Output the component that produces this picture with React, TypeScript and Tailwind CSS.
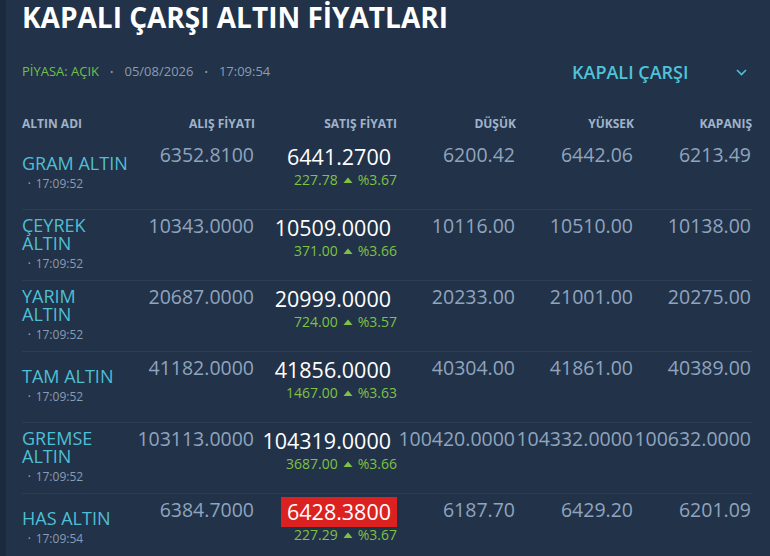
import React from "react";

type Row = {
  name: string[];
  time: string;
  alis: string;
  satis: string;
  change: string;
  pct: string;
  low: string;
  high: string;
  close: string;
  hot?: boolean;
};

const rows: Row[] = [
  { name: ["GRAM ALTIN"], time: "17:09:52", alis: "6352.8100", satis: "6441.2700", change: "227.78", pct: "%3.67", low: "6200.42", high: "6442.06", close: "6213.49" },
  { name: ["ÇEYREK", "ALTIN"], time: "17:09:52", alis: "10343.0000", satis: "10509.0000", change: "371.00", pct: "%3.66", low: "10116.00", high: "10510.00", close: "10138.00" },
  { name: ["YARIM", "ALTIN"], time: "17:09:52", alis: "20687.0000", satis: "20999.0000", change: "724.00", pct: "%3.57", low: "20233.00", high: "21001.00", close: "20275.00" },
  { name: ["TAM ALTIN"], time: "17:09:52", alis: "41182.0000", satis: "41856.0000", change: "1467.00", pct: "%3.63", low: "40304.00", high: "41861.00", close: "40389.00" },
  { name: ["GREMSE", "ALTIN"], time: "17:09:52", alis: "103113.0000", satis: "104319.0000", change: "3687.00", pct: "%3.66", low: "100420.0000", high: "104332.0000", close: "100632.0000" },
  { name: ["HAS ALTIN"], time: "17:09:54", alis: "6384.7000", satis: "6428.3800", change: "227.29", pct: "%3.67", low: "6187.70", high: "6429.20", close: "6201.09", hot: true },
];

const cols = "grid grid-cols-[118px_115px_142px_119px_118px_118px]";

function Num({ v }: { v: string }) {
  return (
    <div className="flex justify-end pt-[4px] pr-[1px] text-[19.5px] leading-[24px] text-[#8fa4be] whitespace-nowrap">
      {v}
    </div>
  );
}

export default function App() {
  return (
    <div
      className="w-[770px] h-[556px] overflow-hidden bg-[#223248] border-l-[6px] border-[#1c2a3d] pl-[16px] pr-[18px]"
      style={{ fontFamily: '"Open Sans", "DejaVu Sans", sans-serif' }}
    >
      <h1 className="text-[28px] leading-[34px] font-bold text-white whitespace-nowrap">
        KAPALI ÇARŞI ALTIN FİYATLARI
      </h1>

      <div className="mt-[26px] h-[24px] flex items-center justify-between">
        <div className="flex items-center text-[13px] text-[#8a9cb4]">
          <span className="text-[#6fc04a]">PİYASA: AÇIK</span>
          <span className="mx-[11px] text-[9px]">•</span>
          <span>05/08/2026</span>
          <span className="mx-[11px] text-[9px]">•</span>
          <span>17:09:54</span>
        </div>
        <div className="w-[180px] flex items-center justify-between pr-[5px] text-[18px] font-semibold text-[#4fc3da]">
          <span>KAPALI ÇARŞI</span>
          <svg width="11" height="7" viewBox="0 0 11 7" fill="none">
            <path d="M1 1l4.5 4.5L10 1" stroke="#4fc3da" strokeWidth="1.6" />
          </svg>
        </div>
      </div>

      <div className={`${cols} mt-[28px] mb-[3px] h-[24px] items-center text-[12px] font-bold text-[#9fb3cb]`}>
        <div>ALTIN ADI</div>
        <div className="text-right">ALIŞ FİYATI</div>
        <div className="text-right">SATIŞ FİYATI</div>
        <div className="text-right">DÜŞÜK</div>
        <div className="text-right">YÜKSEK</div>
        <div className="text-right">KAPANIŞ</div>
      </div>

      {rows.map((r, i) => (
        <div key={i} className={`${cols} h-[71px] shrink-0 border-b border-[#2c3e57]`}>
          <div className="self-center">
            {r.name.map((n, j) => (
              <div key={j} className="text-[18px] leading-[18px] text-[#4fbfd5] whitespace-nowrap">
                {n}
              </div>
            ))}
            <div className="pl-[6px] mt-[1px] text-[12px] leading-[21px] text-[#8a9cb4] flex items-center">
              <span className="text-[7px] mr-[5px]">•</span>
              <span>{r.time}</span>
            </div>
          </div>
          <Num v={r.alis} />
          <div className="flex flex-col items-end pt-[3px]">
            <div
              className={`px-[6px] py-[2px] text-[21.5px] leading-[26px] text-white whitespace-nowrap ${r.hot ? "bg-[#dc2121]" : ""}`}
            >
              {r.satis}
            </div>
            <div className="flex items-center text-[14px] leading-[16px] text-[#7dc243] whitespace-nowrap">
              <span>{r.change}</span>
              <svg width="10" height="6" viewBox="0 0 10 6" className="mx-[5px]">
                <path d="M0.5 6L5 0.5L9.5 6Z" fill="#7dc243" />
              </svg>
              <span>{r.pct}</span>
            </div>
          </div>
          <Num v={r.low} />
          <Num v={r.high} />
          <Num v={r.close} />
        </div>
      ))}
    </div>
  );
}
